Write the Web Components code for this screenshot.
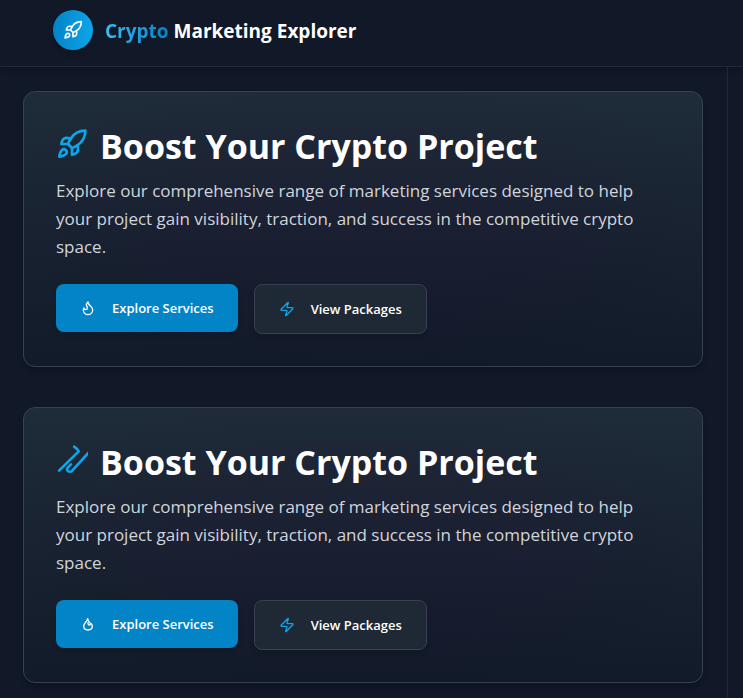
<!DOCTYPE html>
<html lang="en">
<head>
<meta charset="utf-8">
<title>Crypto Marketing Explorer</title>
<style>
body { margin: 0; min-height: 100vh; background: #111827; color: #fff; font-family: "Segoe UI", "Open Sans", "Noto Sans", sans-serif; }
</style>
</head>
<body>
<app-shell>
  <app-header slot="header"></app-header>
  <promo-card icon="rocket" flame="flame"></promo-card>
  <promo-card icon="strokes" flame="ember"></promo-card>
</app-shell>
<script>
const ICONS = {
  rocket: '<path d="M4.5 16.5c-1.5 1.26-2 5-2 5s3.74-.5 5-2c.71-.84.7-2.13-.09-2.91a2.18 2.18 0 0 0-2.91-.09z"/><path d="m12 15-3-3a22 22 0 0 1 2-3.95A12.88 12.88 0 0 1 22 2c0 2.72-.78 7.5-6 11a22.35 22.35 0 0 1-4 2z"/><path d="M9 12H4s.55-3.03 2-4c1.62-1.08 5 0 5 0"/><path d="M12 15v5s3.03-.55 4-2c1.08-1.62 0-5 0-5"/>',
  strokes: '<path d="M2.3 20 17 5.5l-1-1.6-2.4-1.9"/><path d="m25 5.8-12.6 14c-1 1.2-2.6 1.1-3.5.4-1-1-.6-2 .1-2.7l2.2-2.2"/>',
  flame: '<path d="M8.5 14.5A2.5 2.5 0 0 0 11 12c0-1.38-.5-2-1-3-1.072-2.143-.224-4.054 2-6 .5 2.5 2 4.9 4 6.5 2 1.6 3 3.5 3 5.5a7 7 0 1 1-14 0c0-1.153.433-2.294 1-3a2.5 2.5 0 0 0 2.5 2.5z"/>',
  ember: '<path d="M11.5 4c.5 3 1.5 4.5 3.5 6.5 2.5 1 3.5 2.500 3.500 4.500 0 3.500-2.800 6-6.500 6s-6.500-2.500-6.500-6c0-4 5-6 6-11z"/><path d="M12 10c0 2.500.8 3.500 2 3.500s2-.9 2.500-2"/>',
  zap: '<path d="M4 14a1 1 0 0 1-.78-1.63l9.9-10.2a.5.5 0 0 1 .86.46l-1.92 6.02A1 1 0 0 0 13 10h7a1 1 0 0 1 .78 1.63l-9.9 10.2a.5.5 0 0 1-.86-.46l1.92-6.02A1 1 0 0 0 11 14z"/>'
};
class Base extends HTMLElement {
  connectedCallback() {
    if (!this.shadowRoot) this.attachShadow({ mode: 'open' }).innerHTML = this.render();
  }
}
customElements.define('app-icon', class extends Base {
  render() {
    return `<style>:host{display:inline-block;width:16px;height:16px;flex:none}svg{display:block;width:100%;height:100%}</style>
    <svg viewBox="0 0 24 24" fill="none" stroke="currentColor" stroke-width="2" stroke-linecap="round" stroke-linejoin="round" aria-hidden="true">${ICONS[this.getAttribute('name')]}</svg>`;
  }
});
customElements.define('app-header', class extends Base {
  render() {
    return `<style>
      :host{display:flex;align-items:center;gap:12px;padding:10px 53px 16px;border-bottom:1px solid #1f2937;box-shadow:0 4px 6px -1px rgba(0,0,0,.2)}
      .logo{display:grid;place-items:center;width:40px;height:40px;border-radius:50%;background:linear-gradient(90deg,#0284c7,#0ea5e9);box-shadow:0 4px 6px -1px rgba(0,0,0,.2)}
      .logo app-icon{width:20px;height:20px}
      h1{margin:0;padding-top:2px;font-size:19px;line-height:28px;font-weight:700}
      span{color:transparent;background:linear-gradient(90deg,#38bdf8,#0284c7);background-clip:text;-webkit-background-clip:text}
    </style>
    <div class="logo"><app-icon name="rocket"></app-icon></div>
    <h1><span>Crypto</span> Marketing Explorer</h1>`;
  }
});
customElements.define('app-shell', class extends Base {
  render() {
    return `<style>
      :host{display:flex;flex-direction:column;min-height:100vh}
      main{flex:1;display:flex;flex-direction:column;gap:40px;margin-right:15px;padding:24px 24px 15px 23px;border-right:1px solid #1f2937}
    </style>
    <slot name="header"></slot><main><slot></slot></main>`;
  }
});
customElements.define('action-button', class extends Base {
  render() {
    return `<style>
      :host{display:block}
      button{display:flex;align-items:center;gap:16px;padding:14px 24px;border:0;border-radius:8px;font:600 13px/20px "Segoe UI","Open Sans","Noto Sans",sans-serif;color:#fff;background:#0284c7;box-shadow:0 4px 6px -1px rgba(0,0,0,.15);cursor:pointer}
      :host([outline]) button{background:#1f2835;border:1px solid #374151}
      :host([outline]) app-icon{color:#0ea5e9}
    </style>
    <button type="button"><app-icon name="${this.getAttribute('icon')}"></app-icon><slot></slot></button>`;
  }
});
customElements.define('promo-card', class extends Base {
  render() {
    return `<style>
      :host{display:block;padding:32px;border:1px solid #374151;border-radius:12px;background:radial-gradient(ellipse at 50% 50%,rgba(32,24,56,.2),rgba(32,24,56,.14) 40%,rgba(20,50,60,.1) 80%),linear-gradient(180deg,#202b39,#111827);box-shadow:0 4px 6px -1px rgba(0,0,0,.2)}
      h2{display:flex;align-items:center;gap:12px;margin:0 0 8px;font-size:34px;line-height:45px;font-weight:700}
      h2 app-icon{width:32px;height:32px;color:#0ea5e9;align-self:start;margin-top:4px}
      p{margin:0 0 23px;max-width:600px;font-size:17px;line-height:28px;color:#d1d5db}
      .actions{display:flex;flex-wrap:wrap;align-items:flex-start;gap:16px}
    </style>
    <h2><app-icon name="${this.getAttribute('icon')}"></app-icon>Boost Your Crypto Project</h2>
    <p>Explore our comprehensive range of marketing services designed to help your project gain visibility, traction, and success in the competitive crypto space.</p>
    <div class="actions">
      <action-button icon="${this.getAttribute('flame')}">Explore Services</action-button>
      <action-button icon="zap" outline>View Packages</action-button>
    </div>`;
  }
});
</script>
</body>
</html>
